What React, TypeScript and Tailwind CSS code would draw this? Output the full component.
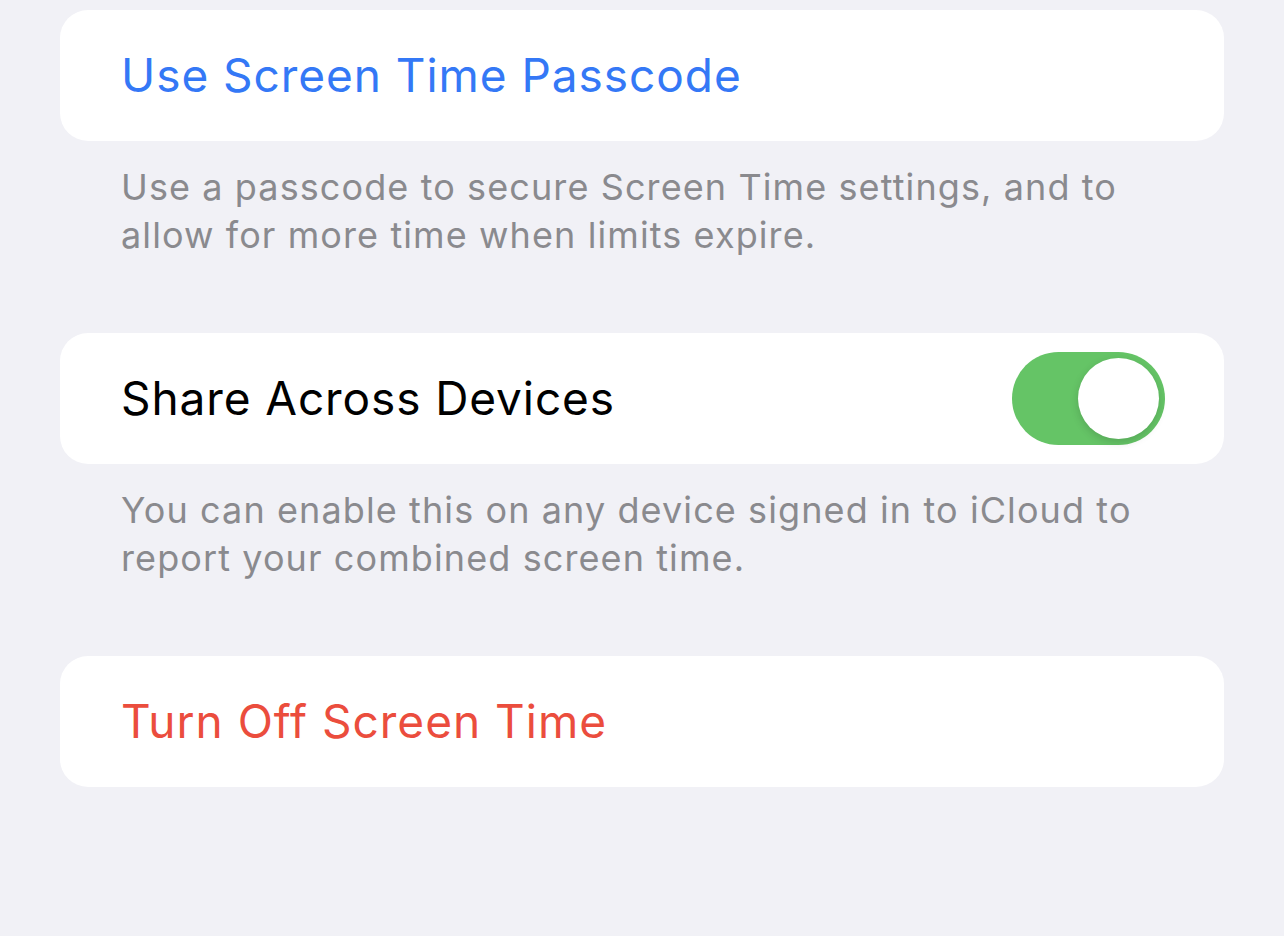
import React, { useState } from "react";

function Toggle({ on, onChange }: { on: boolean; onChange: (v: boolean) => void }) {
  return (
    <button
      onClick={() => onChange(!on)}
      className={`relative w-[153px] h-[93px] rounded-full transition-colors ${
        on ? "bg-[#65c466]" : "bg-[#e9e9eb]"
      }`}
    >
      <span
        className={`absolute top-[6px] w-[81px] h-[81px] rounded-full bg-white shadow-[0_3px_8px_rgba(0,0,0,0.15)] transition-all ${
          on ? "left-[66px]" : "left-[6px]"
        }`}
      />
    </button>
  );
}

export default function App() {
  const [shared, setShared] = useState(true);

  return (
    <div
      className="min-h-[936px] w-full bg-[#f1f1f6] px-[60px] pt-[10px]"
      style={{ fontFamily: "Inter, 'Liberation Sans', sans-serif" }}
    >
      <div className="h-[131px] rounded-[28px] bg-white flex items-center pl-[61px]">
        <span className="text-[46px] text-[#3478f6] tracking-[0.95px]">
          Use Screen Time Passcode
        </span>
      </div>
      <div className="pl-[61px] pr-[40px] pt-[22px] h-[192px]">
        <p className="text-[36px] leading-[48px] text-[#8a8a8e] tracking-[1.1px] whitespace-nowrap">
          Use a passcode to secure Screen Time settings, and to
          <br />
          allow for more time when limits expire.
        </p>
      </div>

      <div className="h-[131px] rounded-[28px] bg-white flex items-center justify-between pl-[61px] pr-[59px]">
        <span className="text-[46px] text-black tracking-[0.9px]">
          Share Across Devices
        </span>
        <Toggle on={shared} onChange={setShared} />
      </div>
      <div className="pl-[61px] pr-[40px] pt-[22px] h-[192px]">
        <p className="text-[36px] leading-[48px] text-[#8a8a8e] tracking-[1.1px] whitespace-nowrap">
          You can enable this on any device signed in to iCloud to
          <br />
          report your combined screen time.
        </p>
      </div>

      <div className="h-[131px] rounded-[28px] bg-white flex items-center pl-[61px]">
        <span className="text-[46px] text-[#eb4d3d] tracking-[1px]">
          Turn Off Screen Time
        </span>
      </div>
    </div>
  );
}
